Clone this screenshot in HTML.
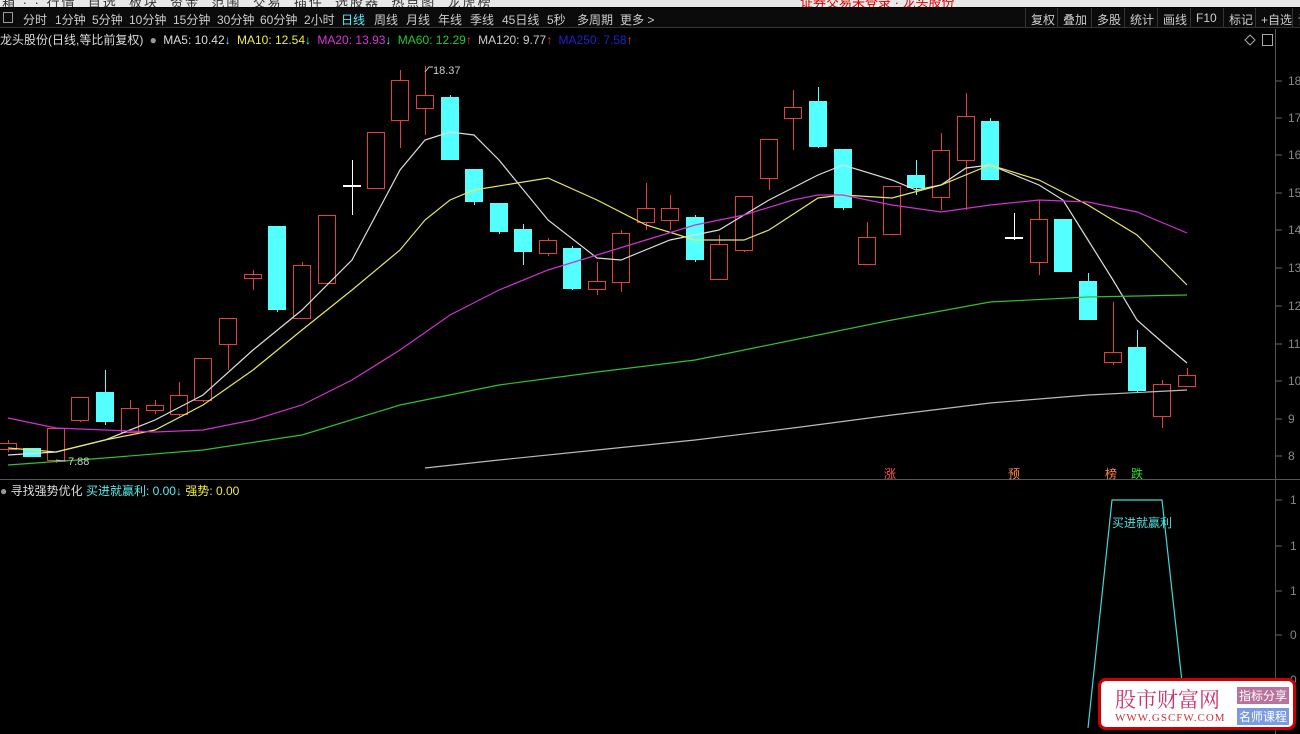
<!DOCTYPE html>
<html><head><meta charset="utf-8">
<style>
*{margin:0;padding:0;box-sizing:border-box}
body{width:1300px;height:734px;background:#000;overflow:hidden;position:relative;font-family:"Liberation Sans","Noto Sans CJK SC",sans-serif;font-size:12px}
.top{position:absolute;left:0;top:0;width:1300px;height:7px;background:#e8e8e8;overflow:hidden}
.tb{position:absolute;left:0;top:8px;width:1300px;height:20px;background:#0b0b0b;border-bottom:1px solid #333;color:#ccc;white-space:nowrap}
.tb span{position:absolute;top:3px}
.info{position:absolute;left:0;top:31px;white-space:nowrap;color:#ddd}
.info span{margin-right:3px}
.rb{position:absolute;top:8px;height:20px;border-left:1px solid #333;color:#ccc;padding:3px 5px 0}
svg{position:absolute;left:0;top:0}
</style></head><body>
<div class="top"><div style="color:#333;position:absolute;top:-8px;left:2px;font-size:13px;letter-spacing:2px">箱 · · 行情 &nbsp;自选 &nbsp;板块 &nbsp;资金 &nbsp;范围 &nbsp;交易 &nbsp;插件 &nbsp;选股器 &nbsp;热点图 &nbsp;龙虎榜</div><div style="color:#d00;position:absolute;top:-8px;left:800px;font-size:13px">证券交易未登录 · 龙头股份</div></div>
<div class="tb">
<span style="left:3px;border:1px solid #999;width:10px;height:11px;top:4px"></span>
<span style="left:23px">分时</span><span style="left:55px">1分钟</span><span style="left:92px">5分钟</span><span style="left:129px">10分钟</span><span style="left:173px">15分钟</span><span style="left:217px">30分钟</span><span style="left:260px">60分钟</span><span style="left:304px">2小时</span><span style="left:341px;color:#5ef">日线</span><span style="left:374px">周线</span><span style="left:406px">月线</span><span style="left:438px">年线</span><span style="left:470px">季线</span><span style="left:502px">45日线</span><span style="left:547px">5秒</span><span style="left:577px">多周期</span><span style="left:620px">更多 &gt;</span>
</div>
<div class="rb" style="left:1025px">复权</div><div class="rb" style="left:1057px">叠加</div><div class="rb" style="left:1091px">多股</div><div class="rb" style="left:1124px">统计</div><div class="rb" style="left:1157px">画线</div><div class="rb" style="left:1190px">F10</div><div class="rb" style="left:1223px">标记</div><div class="rb" style="left:1255px">+自选</div><div class="rb" style="left:1292px">设</div>
<div class="info"><span style="color:#ddd">龙头股份(日线,等比前复权)</span> <span style="color:#999">●</span> <span style="color:#ddd">MA5: 10.42<b style="color:#5ef">↓</b></span> <span style="color:#ee4">MA10: 12.54<b style="color:#5ef">↓</b></span> <span style="color:#d3d">MA20: 13.93<b style="color:#5ef">↓</b></span> <span style="color:#2c2">MA60: 12.29<b style="color:#f33">↑</b></span> <span style="color:#ccc">MA120: 9.77<b style="color:#f33">↑</b></span> <span style="color:#22c">MA250: 7.58<b style="color:#f33">↑</b></span></div>
<div style="position:absolute;left:0;top:482px;white-space:nowrap"><span style="color:#999">●</span> <span style="color:#ddd">寻找强势优化</span> <span style="color:#5ee">买进就赢利: 0.00<b>↓</b></span> <span style="color:#ee4">强势: 0.00</span></div>
<svg id="s" width="1300" height="734" xmlns="http://www.w3.org/2000/svg"></svg>
<div style="position:absolute;left:1098px;top:678px;width:198px;height:52px;background:#fff;border:3px solid #c00;border-radius:8px">
<div style="position:absolute;left:14px;top:3px;font-size:21px;color:#c36;font-family:'Noto Serif CJK SC',serif">股市财富网</div>
<div style="position:absolute;left:14px;top:31px;font-size:11px;color:#c33;font-family:'Liberation Serif',serif;letter-spacing:1px">WWW.GSCFW.COM</div>
<div style="position:absolute;left:136px;top:6px;background:#b7739b;color:#fff;font-size:12px;padding:0 2px">指标分享</div>
<div style="position:absolute;left:136px;top:27px;background:#7a9be0;color:#fff;font-size:12px;padding:0 2px">名师课程</div>
</div>
<script>
var s=document.getElementById('s'),h='';
h+='<line x1="1275.5" y1="29" x2="1275.5" y2="734" stroke="#555"/>';
h+='<line x1="0" y1="479.5" x2="1300" y2="479.5" stroke="#555"/>';
var lab=[[18,81],[17,118],[16,155],[15,193],[14,230],[13,268],[12,306],[11,344],[10,381],[9,419],[8,456]];
lab.forEach(function(l){h+='<line x1="1276" y1="'+l[1]+'" x2="1282" y2="'+l[1]+'" stroke="#666"/><text x="1288" y="'+(l[1]+4)+'" fill="#888" font-size="12">'+l[0]+'</text>';});
[500,546,591,635,680].forEach(function(y,i){h+='<line x1="1276" y1="'+y+'" x2="1282" y2="'+y+'" stroke="#666"/><text x="1290" y="'+(y+4)+'" fill="#888" font-size="12">'+(1-i*0.2).toFixed(0)+'</text>';});
var c=[[8,0,443,449,440,452],[32,1,448,457,448,457],[56,0,428,460,428,463],[80,0,397,420,397,422],[105,1,392,422,370,425],[130,0,408,432,400,432],[155,0,405,410,400,414],[179,0,395,414,382,416],[203,0,358,400,358,402],[228,0,318,344,318,370],[253,0,274,278,270,290],[277,1,226,310,226,312],[302,0,265,318,262,318],[327,0,215,283,215,283],[352,2,185,188,160,215],[376,0,132,188,132,188],[400,0,80,120,70,148],[425,0,95,108,66,135],[450,1,97,160,95,160],[474,1,169,202,169,205],[499,1,203,232,203,234],[523,1,229,252,224,265],[548,0,240,253,238,256],[572,1,248,289,246,290],[597,0,281,289,262,295],[621,0,233,282,230,292],[646,0,208,222,183,230],[670,0,208,220,195,230],[695,1,217,260,215,262],[719,0,244,279,235,279],[744,0,196,250,196,252],[769,0,139,178,139,190],[793,0,107,118,90,150],[818,1,101,147,87,148],[843,1,149,208,149,210],[867,0,237,264,222,265],[892,0,186,234,186,234],[916,1,175,188,160,195],[941,0,150,197,133,210],[966,0,116,160,93,210],[990,1,121,180,118,180],[1014,2,237,238,213,240],[1039,0,219,262,200,275],[1063,1,219,272,219,272],[1088,1,281,320,273,320],[1113,0,352,362,302,365],[1137,1,347,391,330,392],[1162,0,384,416,380,428],[1187,0,375,386,368,386]];
c.forEach(function(k){var x=k[0],col=k[1]==1?'#54ffff':(k[1]==2?'#fff':'#e04040');
h+='<line x1="'+(x+.5)+'" y1="'+k[4]+'" x2="'+(x+.5)+'" y2="'+k[5]+'" stroke="'+col+'"/>';
if(k[1]==1)h+='<rect x="'+(x-9)+'" y="'+k[2]+'" width="18" height="'+(k[3]-k[2])+'" fill="#54ffff"/>';
else if(k[1]==2)h+='<rect x="'+(x-9)+'" y="'+k[2]+'" width="18" height="2" fill="#fff"/>';
else h+='<rect x="'+(x-8.5)+'" y="'+(k[2]+.5)+'" width="17" height="'+(k[3]-k[2])+'" fill="#000" stroke="#e04040"/>';});
function pl(p,col){h+='<polyline fill="none" stroke="'+col+'" stroke-width="1.2" points="'+p+'"/>';}
pl('8,455 56,452 105,440 155,420 203,395 253,350 302,310 352,260 400,170 425,140 450,132 474,135 499,160 548,220 597,258 621,260 670,240 719,230 769,200 818,175 843,165 892,180 916,190 941,185 966,168 990,165 1039,185 1063,200 1088,240 1113,280 1137,320 1162,342 1187,363','#ddd');
pl('8,448 56,452 105,440 155,430 203,405 253,370 302,330 352,290 400,250 425,220 450,200 474,190 548,178 597,200 646,225 695,240 744,240 769,230 818,198 843,195 892,198 941,185 990,165 1039,180 1088,205 1137,235 1187,285','#e8e860');
pl('8,418 56,428 105,430 155,432 203,430 253,420 302,405 352,380 400,350 450,315 499,290 548,270 597,255 646,240 695,225 744,215 793,200 818,195 843,195 892,205 941,212 990,205 1039,200 1088,202 1137,212 1187,233','#d030d0');
pl('8,465 105,458 203,450 302,435 400,405 499,385 597,372 695,360 744,350 818,335 892,320 990,302 1088,297 1187,295','#30c030');
pl('425,468 499,460 597,450 695,440 793,428 892,415 990,403 1088,395 1187,390','#bbb');
h+='<text x="433" y="74" fill="#ccc" font-size="11">18.37</text><path d="M425,72 l4,-5 h4" stroke="#ccc" fill="none"/>';
h+='<text x="68" y="465" fill="#ccc" font-size="11">7.88</text><path d="M56,460 l6,1 h4" stroke="#ccc" fill="none"/>';
[['涨',884,'#f55'],['预',1008,'#f84'],['榜',1105,'#f84'],['跌',1131,'#3d3']].forEach(function(t){h+='<text x="'+t[1]+'" y="478" fill="'+t[2]+'" font-size="12">'+t[0]+'</text>';});
h+='<polyline fill="none" stroke="#40d8d8" stroke-width="1.2" points="1088,728 1112,500 1162,500 1184,700"/>';
h+='<text x="1112" y="527" fill="#50e0e0" font-size="12">买进就赢利</text>';
h+='<path d="M1250,35 l5,5 -5,5 -5,-5z" stroke="#aaa" fill="none"/><rect x="1262.5" y="34.5" width="10" height="11" stroke="#aaa" fill="none"/>';
s.innerHTML=h;
</script>
</body></html>
